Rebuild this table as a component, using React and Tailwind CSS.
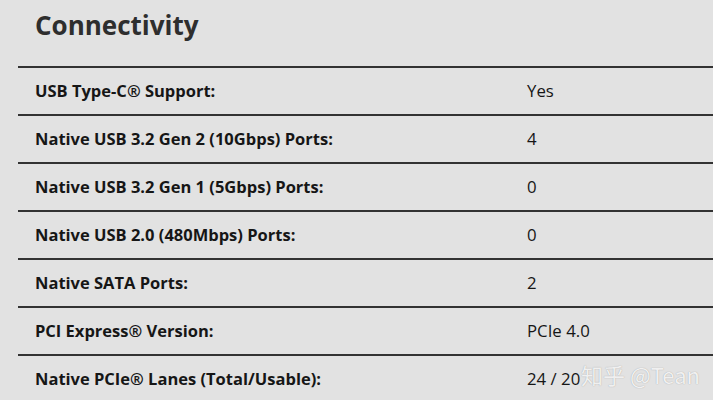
export default function App() {
  const rows = [
    ["USB Type-C® Support:", "Yes"],
    ["Native USB 3.2 Gen 2 (10Gbps) Ports:", "4"],
    ["Native USB 3.2 Gen 1 (5Gbps) Ports:", "0"],
    ["Native USB 2.0 (480Mbps) Ports:", "0"],
    ["Native SATA Ports:", "2"],
    ["PCI Express® Version:", "PCIe 4.0"],
    ["Native PCIe® Lanes (Total/Usable):", "24 / 20"],
  ];
  return (
    <div className="w-[720px] h-[403px] bg-white overflow-hidden" style={{ fontFamily: '"Open Sans", sans-serif' }}>
      <div className="relative w-[713px] h-[400px] bg-[#e2e2e2] text-[#161616]">
        <h1 className="pl-[35px] pt-[6px] h-[66px] text-[26px] font-bold text-[#2e2e2e] leading-[38px]">Connectivity</h1>
        <div className="ml-[18px]">
          {rows.map(([k, v]) => (
            <div key={k} className="border-t-2 border-[#333] h-[48px] flex items-center">
              <div className="pl-[17px] w-[509px] text-[16.5px] font-bold leading-none">{k}</div>
              <div className="text-[16.8px] leading-none">{v}</div>
            </div>
          ))}
        </div>
        <div
          className="absolute left-[581px] top-[358px] text-[22px] text-white/85"
          style={{ fontFamily: '"Noto Sans CJK SC", "Noto Sans", sans-serif', textShadow: "0 0 1px rgba(0,0,0,0.35)" }}
        >
          知乎 @Tean
        </div>
      </div>
    </div>
  );
}
